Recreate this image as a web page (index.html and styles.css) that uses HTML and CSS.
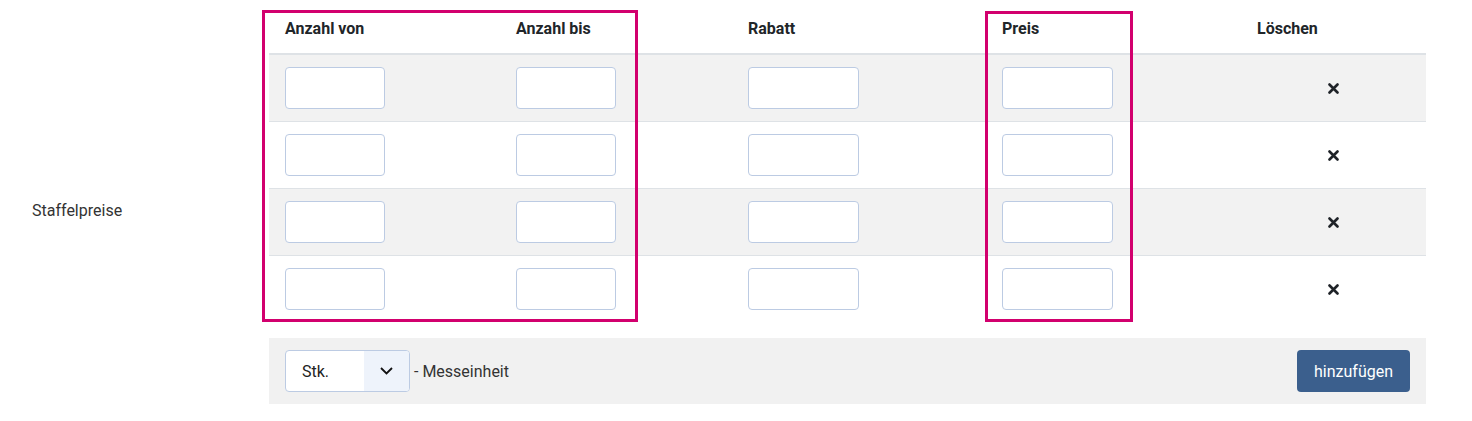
FILE: index.html
```html
<!DOCTYPE html>
<html lang="de">
<head>
    <meta charset="UTF-8">
    <meta name="viewport" content="width=device-width, initial-scale=1.0">
    <title>Staffelpreise</title>
    <link rel="stylesheet" href="styles.css">
</head>

<body>
    <div class="form-row">
        <div class="form-label">Staffelpreise</div>

        <div class="form-field">
            <table class="tier-table">
                <thead>
                    <tr>
                        <th class="col-from">Anzahl von</th>
                        <th class="col-to">Anzahl bis</th>
                        <th class="col-discount">Rabatt</th>
                        <th class="col-price">Preis</th>
                        <th class="col-delete">Löschen</th>
                    </tr>
                </thead>
                <tbody>
                    <tr>
                        <td><input type="text" class="input-small"></td>
                        <td><input type="text" class="input-small"></td>
                        <td><input type="text" class="input-wide"></td>
                        <td><input type="text" class="input-wide"></td>
                        <td class="cell-delete"><button class="btn-remove" title="Löschen"><svg width="11" height="11" viewBox="0 0 11 11"><path d="M1.5 1.5 L9.5 9.5 M9.5 1.5 L1.5 9.5" stroke="#1f2328" stroke-width="2.6" stroke-linecap="round"/></svg></button></td>
                    </tr>
                    <tr>
                        <td><input type="text" class="input-small"></td>
                        <td><input type="text" class="input-small"></td>
                        <td><input type="text" class="input-wide"></td>
                        <td><input type="text" class="input-wide"></td>
                        <td class="cell-delete"><button class="btn-remove" title="Löschen"><svg width="11" height="11" viewBox="0 0 11 11"><path d="M1.5 1.5 L9.5 9.5 M9.5 1.5 L1.5 9.5" stroke="#1f2328" stroke-width="2.6" stroke-linecap="round"/></svg></button></td>
                    </tr>
                    <tr>
                        <td><input type="text" class="input-small"></td>
                        <td><input type="text" class="input-small"></td>
                        <td><input type="text" class="input-wide"></td>
                        <td><input type="text" class="input-wide"></td>
                        <td class="cell-delete"><button class="btn-remove" title="Löschen"><svg width="11" height="11" viewBox="0 0 11 11"><path d="M1.5 1.5 L9.5 9.5 M9.5 1.5 L1.5 9.5" stroke="#1f2328" stroke-width="2.6" stroke-linecap="round"/></svg></button></td>
                    </tr>
                    <tr>
                        <td><input type="text" class="input-small"></td>
                        <td><input type="text" class="input-small"></td>
                        <td><input type="text" class="input-wide"></td>
                        <td><input type="text" class="input-wide"></td>
                        <td class="cell-delete"><button class="btn-remove" title="Löschen"><svg width="11" height="11" viewBox="0 0 11 11"><path d="M1.5 1.5 L9.5 9.5 M9.5 1.5 L1.5 9.5" stroke="#1f2328" stroke-width="2.6" stroke-linecap="round"/></svg></button></td>
                    </tr>
                </tbody>
            </table>

            <div class="tier-footer">
                <div class="unit">
                    <div class="unit-select">
                        <span class="unit-value">Stk.</span>
                        <span class="unit-toggle"><svg width="13" height="8" viewBox="0 0 13 8"><polyline points="1,1 6.5,6.5 12,1" fill="none" stroke="#111" stroke-width="1.8"/></svg></span>
                    </div>
                    <span class="unit-label">- Messeinheit</span>
                </div>
                <button class="btn-add">hinzufügen</button>
            </div>

            <!-- Markierungen -->
            <div class="highlight highlight-qty"></div>
            <div class="highlight highlight-price"></div>
        </div>
    </div>
</body>
</html>
```

FILE: styles.css
```css
* {
    box-sizing: border-box;
}

body {
    margin: 0;
    padding: 0;
    font-family: Roboto, 'Liberation Sans', sans-serif;
    font-size: 16px;
    color: #212529;
    background-color: #fff;
}

.form-row {
    display: flex;
    align-items: center;
    height: 421px;
    padding-bottom: 17px;
}

.form-label {
    width: 269px;
    flex-shrink: 0;
    padding-left: 32px;
    padding-top: 17px;
    color: #333;
}

.form-field {
    position: relative;
    width: 1157px;
    align-self: flex-start;
}

.tier-table {
    width: 100%;
    border-collapse: collapse;
    table-layout: fixed;
}

.tier-table th {
    text-align: left;
    font-weight: bold;
    padding: 18px 16px 14px;
    line-height: 20px;
    height: 54px;
    border-bottom: 2px solid #dee2e6;
}

.col-from { width: 231px; }
.col-to { width: 232px; }
.col-discount { width: 254px; }
.col-price { width: 255px; }
.col-delete { width: 185px; }

.tier-table td {
    padding: 12px 16px 12px;
    border-bottom: 1px solid #dee2e6;
    vertical-align: middle;
}

.tier-table tbody tr:nth-child(odd) {
    background-color: #f2f2f2;
}

.tier-table tbody tr:last-child td {
    border-bottom: none;
}

input {
    display: block;
    height: 42px;
    border: 1px solid #bccbe3;
    border-radius: 4px;
    background-color: #fff;
    padding: 6px 10px;
    font: inherit;
}

.input-small {
    width: 100px;
}

.input-wide {
    width: 111px;
}

.cell-delete {
    text-align: center;
}

.btn-remove {
    background: none;
    border: none;
    padding: 0;
    cursor: pointer;
    display: block;
    margin: 0 auto;
    height: 11px;
}

.btn-remove svg {
    display: block;
}

.tier-footer {
    display: flex;
    align-items: center;
    justify-content: space-between;
    margin-top: 16px;
    padding: 12px 16px;
    background-color: #f1f1f1;
}

.unit {
    display: flex;
    align-items: center;
    gap: 4px;
}

.unit-select {
    display: flex;
    width: 125px;
    height: 42px;
    border: 1px solid #bccbe3;
    border-radius: 4px;
    background-color: #fff;
    overflow: hidden;
}

.unit-value {
    flex: 1;
    display: flex;
    align-items: center;
    padding-left: 16px;
    color: #222;
}

.unit-toggle {
    width: 45px;
    display: flex;
    align-items: center;
    justify-content: center;
    background-color: #eef3fb;
}

.unit-label {
    color: #333;
}

.btn-add {
    height: 42px;
    padding: 0 17px;
    border: none;
    border-radius: 4px;
    background-color: #3b5f8d;
    color: #fff;
    font-family: inherit;
    font-size: 16px;
    cursor: pointer;
}

.highlight {
    position: absolute;
    border: 3px solid #d2006e;
    pointer-events: none;
}

.highlight-qty {
    left: -7px;
    top: 10px;
    width: 376px;
    height: 312px;
}

.highlight-price {
    left: 716px;
    top: 11px;
    width: 148px;
    height: 311px;
}
```
